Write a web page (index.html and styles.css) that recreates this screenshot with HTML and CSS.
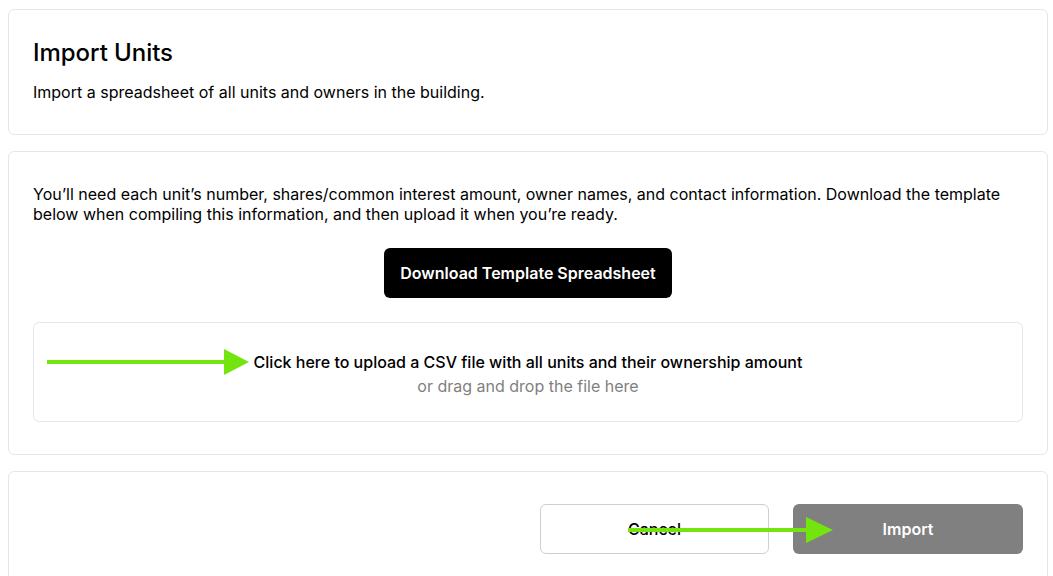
FILE: index.html
```html
<!DOCTYPE html>
<html lang="en">
<head>
<meta charset="utf-8">
<title>Import Units</title>
<link rel="stylesheet" href="styles.css">
</head>
<body>
<main class="page">
  <section class="card card-head">
    <h1 class="title">Import Units</h1>
    <p class="subtitle">Import a spreadsheet of all units and owners in the building.</p>
  </section>

  <section class="card card-body">
    <p class="intro">You’ll need each unit’s number, shares/common interest amount, owner names, and contact information. Download the template below when compiling this information, and then upload it when you’re ready.</p>
    <div class="center-row">
      <button class="btn btn-dark">Download Template Spreadsheet</button>
    </div>
    <div class="dropzone">
      <div class="drop-main">Click here to upload a CSV file with all units and their ownership amount</div>
      <div class="drop-sub">or drag and drop the file here</div>
    </div>
  </section>

  <section class="card card-foot">
    <button class="btn btn-outline">Cancel</button>
    <button class="btn btn-grey">Import</button>
  </section>

  <svg class="arrow arrow-upload" width="205" height="28" viewBox="0 0 205 28" aria-hidden="true">
    <rect x="0" y="12" width="180" height="4" fill="#74e40e"/>
    <polygon points="177,1 202,14 177,27" fill="#74e40e"/>
  </svg>
  <svg class="arrow arrow-import" width="210" height="28" viewBox="0 0 210 28" aria-hidden="true">
    <rect x="0" y="12" width="182" height="4" fill="#74e40e"/>
    <polygon points="178,1 205,14 178,27" fill="#74e40e"/>
  </svg>
</main>
</body>
</html>
```

FILE: styles.css
```css
* { box-sizing: border-box; }

html, body {
  margin: 0;
  padding: 0;
  background: #ffffff;
}

body {
  font-family: Inter, "Noto Sans", "Liberation Sans", sans-serif;
  color: #000000;
  overflow: hidden;
}

.page {
  position: relative;
  display: flex;
  flex-direction: column;
  gap: 16px;
  padding: 9px 5px 0 8px;
}

.card {
  border: 1px solid #e6e6e6;
  border-radius: 6px;
  background: #fff;
}

.card-head {
  padding: 30px 24px 32px;
  display: flex;
  flex-direction: column;
  gap: 16px;
}

.title {
  margin: 0;
  font-size: 24px;
  line-height: 26px;
  font-weight: 500;
  letter-spacing: -0.05px;
}

.subtitle {
  margin: 0;
  font-size: 16px;
  line-height: 20px;
}

.card-body {
  padding: 32px 24px;
  display: flex;
  flex-direction: column;
  gap: 24px;
}

.intro {
  margin: 0;
  font-size: 16px;
  line-height: 20px;
}

.center-row {
  display: flex;
  justify-content: center;
}

.btn {
  font-family: inherit;
  font-size: 16px;
  height: 50px;
  border-radius: 6px;
  cursor: pointer;
}

.btn-dark {
  background: #000;
  color: #fff;
  border: none;
  font-weight: 600;
  padding: 0 16px;
}

.dropzone {
  height: 100px;
  border: 1px solid #e6e6e6;
  border-radius: 6px;
  display: flex;
  flex-direction: column;
  align-items: center;
  justify-content: center;
  gap: 4px;
  padding-top: 4px;
}

.drop-main {
  font-size: 16px;
  line-height: 20px;
  font-weight: 500;
}

.drop-sub {
  font-size: 16px;
  line-height: 20px;
  color: #7f7f7f;
}

.card-foot {
  height: 140px;
  padding: 32px 24px;
  display: flex;
  justify-content: flex-end;
  align-items: flex-start;
  gap: 24px;
}

.btn-outline {
  width: 229px;
  background: #fff;
  color: #000;
  border: 1px solid #cfcfcf;
  font-weight: 500;
}

.btn-grey {
  width: 230px;
  background: #808080;
  color: #fff;
  border: none;
  font-weight: 600;
}

.arrow {
  position: absolute;
  display: block;
}

.arrow-upload {
  left: 47px;
  top: 348px;
}

.arrow-import {
  left: 628px;
  top: 516px;
}
```
